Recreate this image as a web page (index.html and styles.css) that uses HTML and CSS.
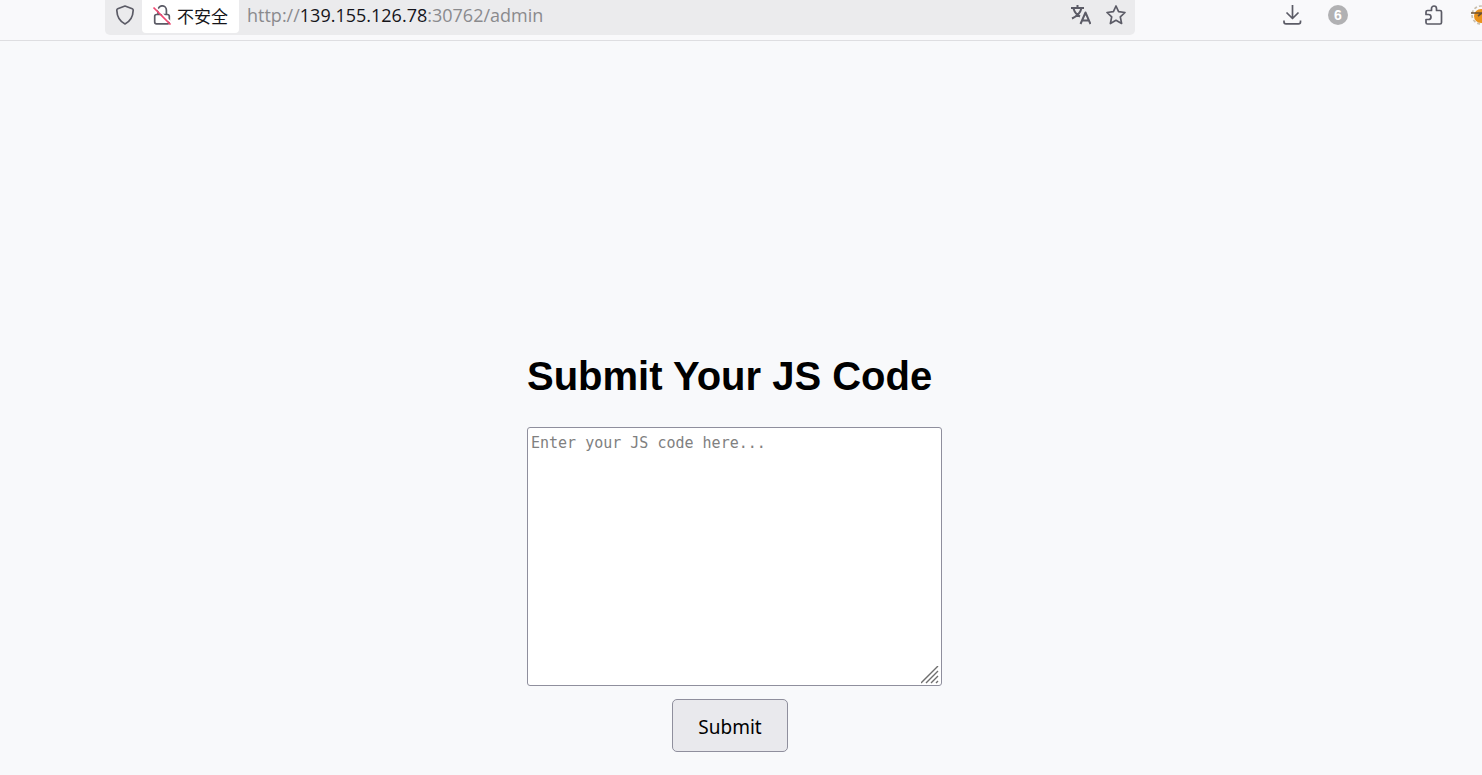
FILE: index.html
```html
<!DOCTYPE html>
<html lang="en">
  <head>
    <meta charset="UTF-8" />
    <title>Submit Your JS Code</title>
    <link rel="stylesheet" href="styles.css">
  </head>
  <body>
    <header class="toolbar">
      <div class="urlbar">
        <button class="icon-btn shield" aria-label="Tracking protection">
          <svg viewBox="0 0 20 20">
            <path d="M10 1 L17.3 3.8 Q18.3 4.2 18.2 5.3 C18 11.5 16 16 10 19 C4 16 2 11.5 1.8 5.3 Q1.7 4.2 2.7 3.8 Z" />
          </svg>
        </button>
        <button class="identity">
          <svg viewBox="0 0 20 20">
            <path d="M6 9.500 V5 A4.200 4.200 0 0 1 14.400 5 V9.500 M4.500 9.500 H15.500 Q17.300 9.500 17.300 11.300 V17 Q17.300 18.800 15.500 18.800 H4.500 Q2.700 18.800 2.700 17 V11.300 Q2.700 9.500 4.500 9.500 Z" />
            <path class="halo" d="M3 1.500 L20 18.500" />
            <path class="slash" d="M1.500 2.500 L18.500 19.500" />
          </svg>
          <span lang="zh-CN">不安全</span>
        </button>
        <div class="url">http://<span class="host">139.155.126.78</span>:30762/admin</div>
        <button class="icon-btn translate" aria-label="Translate">
          <svg viewBox="0 0 20 20">
            <path d="M0 3 H13 M6.500 0 V3 M10.500 3 C9.500 7.500 5.500 11.500 1 13.500 M2.500 3.500 C3.500 7 6 10 9 11.500 M9.500 19 L14.500 7.500 L19.500 19 M11 15.500 H18" />
          </svg>
        </button>
        <button class="icon-btn" aria-label="Bookmark">
          <svg viewBox="0 0 20 20">
            <path d="M10 1 L12.600 6.700 L19 7.500 L14.300 11.900 L15.600 18.500 L10 15.300 L4.400 18.500 L5.700 11.900 L1 7.500 L7.400 6.700 Z" />
          </svg>
        </button>
      </div>
      <div class="tools">
        <button class="icon-btn" aria-label="Downloads">
          <svg viewBox="0 0 20 20">
            <path d="M10.500 0 V13 M4.500 7.500 L10.500 13.500 L16.500 7.500 M2 15.500 V17 Q2 18.800 4 18.800 H16.500 Q18.500 18.800 18.500 17 V15.500" />
          </svg>
        </button>
        <button class="count">6</button>
        <button class="icon-btn extensions" aria-label="Extensions">
          <svg viewBox="0 0 20 20">
            <path d="M3.500 5.500 H7.500 V3.500 A2.500 2.500 0 0 1 12.500 3.500 V5.500 H16 Q17.500 5.500 17.500 7 V17.500 Q17.500 19 16 19 H3.500 Q2 19 2 17.500 V14.500 H4.500 A2.500 2.500 0 0 0 4.500 9.500 H2 V7 Q2 5.500 3.500 5.500 Z" />
          </svg>
        </button>
        <button class="icon-btn" aria-label="Monkey">
          <svg class="monkey" viewBox="0 0 20 20">
            <circle class="ring" cx="11" cy="10" r="9" />
            <circle class="face" cx="11" cy="11" r="7" />
            <path class="band" d="M1 8 H12 L8 11" />
          </svg>
        </button>
      </div>
    </header>

    <main>
      <form class="code-form">
        <h1><label for="code">Submit Your JS Code</label></h1>
        <div class="editor">
          <textarea id="code" placeholder="Enter your JS code here..."></textarea>
          <svg class="grip" viewBox="0 0 18 18">
            <path d="M0 17 L17 0 M5 17 L17 5 M10 17 L17 10 M15 17 L17 15" />
          </svg>
        </div>
        <button class="submit" type="submit">Submit</button>
      </form>
    </main>
  </body>
</html>
```
FILE: styles.css
```css
:root {
  --background: #f8f9fb;
  --field: #ebebed;
  --icon: #5b5b66;
  --border: #8f8f9d;
  --muted: #8a8a8d;
}

* {
  box-sizing: border-box;
}

body {
  display: flex;
  flex-direction: column;
  min-height: 100vh;
  margin: 0;
  background: var(--background);
  font-family: "Liberation Sans", Arial, sans-serif;
}

button {
  margin: 0;
  padding: 0;
  border: 0;
  background: none;
  color: inherit;
  cursor: pointer;
}

.toolbar {
  display: flex;
  align-items: flex-start;
  height: 41px;
  padding-left: 105px;
  border-bottom: 1px solid #dedee1;
  background: #f9f9fb;
  overflow: hidden;
}

.urlbar {
  display: flex;
  flex: 1;
  align-items: center;
  height: 35px;
  padding: 0 9px 5px 10px;
  border-radius: 0 0 5px 5px;
  background: var(--field);
}

.icon-btn {
  width: 20px;
  height: 20px;
}

svg {
  display: block;
  width: 20px;
  height: 20px;
  fill: none;
  stroke: var(--icon);
  stroke-width: 1.7;
  stroke-linejoin: round;
}

.shield {
  margin-right: 7px;
}

.identity {
  display: flex;
  align-items: center;
  gap: 5px;
  height: 36px;
  padding: 0 11px 0 10px;
  border-radius: 0 0 4px 4px;
  background: #fff;
  color: #15141a;
  font: 17px "Noto Sans CJK SC", sans-serif;
}

.halo {
  stroke: #fff;
}

.slash {
  stroke: #f04770;
}

.url {
  flex: 1;
  padding: 0 0 0 8px;
  color: var(--muted);
  font: 18px/24px "Open Sans", sans-serif;
}

.host {
  color: #15141a;
}

.translate {
  margin-right: 15px;
}

.translate svg {
  stroke-width: 2;
}

.tools {
  display: flex;
  align-items: center;
  gap: 26px;
  height: 30px;
  margin: 0 -8px 0 147px;
}

.count {
  width: 20px;
  height: 20px;
  border-radius: 50%;
  background: #b1b1b3;
  color: #fff;
  font: bold 14px/20px "Liberation Sans", Arial, sans-serif;
}

.extensions {
  margin-left: 50px;
}

.monkey .ring {
  stroke: #c9bfae;
  stroke-dasharray: 3 2;
}

.monkey .face {
  fill: #e8921c;
  stroke: none;
}

.monkey .band {
  stroke: #6b5031;
}

main {
  display: flex;
  flex: 1;
  flex-direction: column;
  align-items: center;
  justify-content: flex-end;
  padding: 23px 22px 23px 0;
}

.code-form {
  width: 406px;
}

h1 {
  margin: 0 0 27px;
  font-size: 40px;
  line-height: 48px;
  white-space: nowrap;
}

.editor {
  position: relative;
  width: 415px;
}

textarea {
  display: block;
  width: 100%;
  height: 259px;
  padding: 5px 3px;
  border: 1px solid var(--border);
  border-radius: 3px;
  background: #fff;
  font: 15px/20px "DejaVu Sans Mono", monospace;
  resize: none;
}

textarea::placeholder {
  color: #808080;
}

.grip {
  position: absolute;
  right: 3px;
  bottom: 2px;
  width: 18px;
  height: 18px;
  stroke: #6e6e6e;
  stroke-width: 1.4;
  pointer-events: none;
}

.submit {
  display: block;
  height: 53px;
  margin: 13px auto 0;
  padding: 2px 25px 0;
  border: 1px solid var(--border);
  border-radius: 5px;
  background: #e9e9ed;
  color: #000;
  font: 19px "Noto Sans", sans-serif;
}
```
